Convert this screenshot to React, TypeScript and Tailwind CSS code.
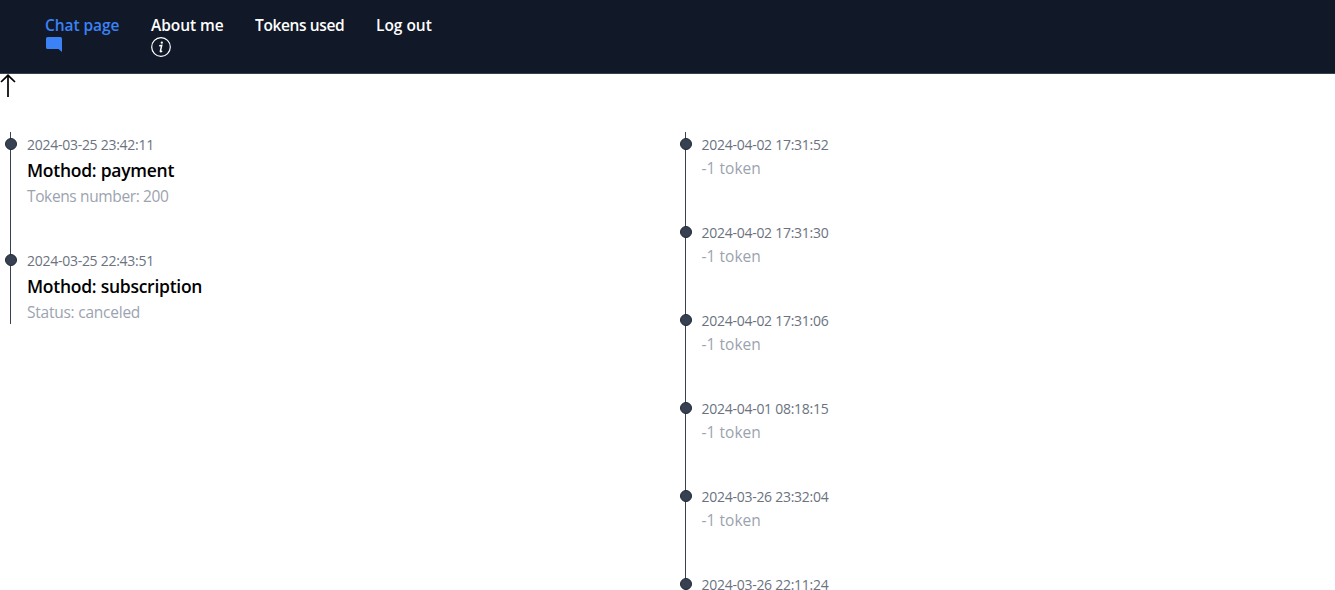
import type { ReactNode } from "react";

type Entry = { time: string; title?: string; note?: string; noteClass?: string };

const payments: Entry[] = [
  { time: "2024-03-25 23:42:11", title: "Mothod: payment", note: "Tokens number: 200", noteClass: "tracking-[-0.37px]" },
  { time: "2024-03-25 22:43:51", title: "Mothod: subscription", note: "Status: canceled", noteClass: "tracking-[-0.24px]" },
];

const usage: Entry[] = [
  { time: "2024-04-02 17:31:52", note: "-1 token" },
  { time: "2024-04-02 17:31:30", note: "-1 token" },
  { time: "2024-04-02 17:31:06", note: "-1 token" },
  { time: "2024-04-01 08:18:15", note: "-1 token" },
  { time: "2024-03-26 23:32:04", note: "-1 token" },
  { time: "2024-03-26 22:11:24" },
];

function NavItem({ label, className, children }: { label: string; className: string; children?: ReactNode }) {
  return (
    <li className={`h-12 shrink-0 whitespace-nowrap ${className}`}>
      <a href="#" className="block">
        <span className="block h-[23px] leading-[22px]">{label}</span>
        {children}
      </a>
    </li>
  );
}

function Timeline({ entries }: { entries: Entry[] }) {
  return (
    <ol className="ml-2.5 self-start border-l border-[#374151]">
      {entries.map((entry) => (
        <li key={entry.time} className="relative mb-10 ml-4 last:mb-0">
          <div className="absolute top-1.5 -left-[22px] size-3 rounded-full border border-[#1f2937] bg-[#374151]" />
          <time className="block h-6 text-[14px] leading-[26px] tracking-[-0.27px] text-[#6b7280]">{entry.time}</time>
          {entry.title && (
            <h3 className="h-7 text-[17.5px] leading-[29px] font-semibold tracking-[-0.26px] text-black">{entry.title}</h3>
          )}
          {entry.note && (
            <p className={`h-6 text-[15.5px] leading-[25px] text-[#9ca3af] ${entry.noteClass ?? "tracking-[0.03px]"}`}>
              {entry.note}
            </p>
          )}
        </li>
      ))}
    </ol>
  );
}

export default function App() {
  return (
    <div className="h-screen overflow-hidden bg-white font-['Open_Sans','Noto_Sans',sans-serif]">
      <nav className="h-[74px] border-b border-[#374151] bg-[#111827] pt-3.5 pl-[45px]">
        <ul className="flex gap-8 text-[15.5px] font-semibold text-white">
          <NavItem label="Chat page" className="w-[74px] tracking-[-0.08px] text-[#3b82f6]">
            <svg className="ml-px h-[15px] w-4" viewBox="0 0 16 15" fill="currentColor">
              <path d="M1.5 0H14.5Q16 0 16 1.5V15L12.5 12H1.5Q0 12 0 10.5V1.5Q0 0 1.5 0Z" />
            </svg>
          </NavItem>
          <NavItem label="About me" className="w-[72px] tracking-[-0.06px]">
            <svg className="size-5" viewBox="0 0 20 20" fill="none" stroke="currentColor">
              <circle cx="10" cy="10" r="9.3" strokeWidth="1.2" />
              <circle cx="10.8" cy="5.7" r="1.15" fill="currentColor" stroke="none" />
              <path d="M8.2 8.8 10.7 8.4 9.4 14.2Q9.2 15.2 11.2 14.2" strokeWidth="1.5" />
            </svg>
          </NavItem>
          <NavItem label="Tokens used" className="w-[89px] tracking-[-0.38px]" />
          <NavItem label="Log out" className="w-[57px] tracking-[-0.03px]" />
        </ul>
      </nav>
      <svg className="block h-6 w-4" viewBox="0 0 16 24" fill="none" stroke="black">
        <path d="M8 1.5V23" strokeWidth="1.7" />
        <path d="M1 8 8 1.3 15 8" strokeWidth="1.7" />
      </svg>
      <main className="mt-[34px] grid grid-cols-2 gap-3.5">
        <Timeline entries={payments} />
        <Timeline entries={usage} />
      </main>
    </div>
  );
}
